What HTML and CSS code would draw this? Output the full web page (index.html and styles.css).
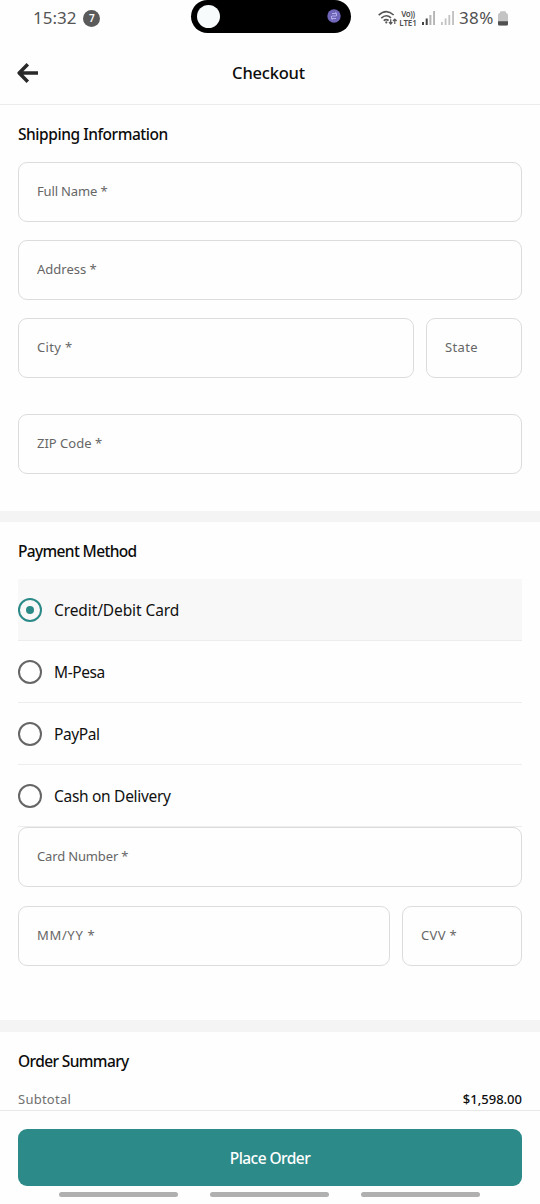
FILE: index.html
```html
<!DOCTYPE html>
<html lang="en">
<head>
<meta charset="utf-8">
<title>Checkout</title>
<link rel="stylesheet" href="styles.css">
</head>
<body>
<div class="screen">
  <div class="statusbar">
    <div class="status-left"><span class="clock">15:32</span><span class="count">7</span></div>
    <div class="island">
      <span class="camera"></span>
      <svg class="island-icon" width="14" height="14" viewBox="0 0 14 14"><circle cx="7" cy="7" r="6.7" fill="#6f66ba"/><path d="M5 4.500h4.500v2.500M8.300 3.200L9.800 4.500M9 9.500H4.500V7M5.700 10.800L4.200 9.500M5 7h4" fill="none" stroke="#b9b3ee" stroke-width=".9"/></svg>
    </div>
    <div class="status-right">
      <svg class="wifi" width="20" height="16" viewBox="0 0 20 16"><g fill="none" stroke="#555" stroke-width="1.6"><path d="M.7 5.2Q8 -1.8 15.7 5"/><path d="M3.300 8.100Q8 3.600 13 7.800"/><path d="M5.700 10.600Q8 8.700 10.600 10.500"/></g><circle cx="8.300" cy="12.400" r="1.100" fill="#555"/><path d="M12.700 9.300v4.500M11 12.200l1.700 1.900 1.700-1.900M16.800 14V9.200M15 11l1.800-1.900L18.600 11" fill="none" stroke="#555" stroke-width="1.200"/></svg>
      <div class="volte"><span class="vo">Vo))</span><span>LTE1</span></div>
      <svg class="signal" width="14" height="14" viewBox="0 0 14 14"><path d="M0 11h2v3H0zM3.700 7.500h2V14h-2z" fill="#444"/><path d="M7.400 4h2v10h-2zM11.100 0h1.900v14h-1.900z" fill="#b5b5b5"/></svg>
      <svg class="signal signal-two" width="14" height="14" viewBox="0 0 14 14"><path d="M0 11h1.800v3H0zM3.700 7.500h1.800V14H3.700zM7.400 4h1.800v10H7.400zM11.100 0h1.900v14h-1.900z" fill="#c2c2c2"/></svg>
      <span class="percent">38%</span>
      <svg class="battery" width="10" height="15" viewBox="0 0 10 15"><path d="M0 13V4Q0 2.200 2 2V1.200Q2 .2 3 .2h4q1 0 1 1V2q2 .2 2 2v9q0 1.500-1.500 1.500h-7Q0 14.500 0 13z" fill="#c4c4c4"/><path d="M0 10.200h10V13q0 1.500-1.500 1.500h-7Q0 14.500 0 13z" fill="#505050"/></svg>
    </div>
  </div>

  <header class="header">
    <svg class="back" width="22" height="22" viewBox="0 0 22 22"><path d="M21 11H3M10.800 2.300L2.200 11l8.600 8.700" fill="none" stroke="#292929" stroke-width="3.500" stroke-linejoin="round"/></svg>
    <h1 class="title">Checkout</h1>
  </header>

  <main class="content">
    <section class="section shipping">
      <h2 class="heading h-shipping">Shipping Information</h2>
      <div class="fields">
        <div class="field"><span class="tight">Full Name *</span></div>
        <div class="field"><span>Address *</span></div>
        <div class="row city-row"><div class="field"><span class="loose">City *</span></div><div class="field"><span class="loose">State</span></div></div>
        <div class="field zip"><span>ZIP Code *</span></div>
      </div>
    </section>

    <section class="section payment">
      <h2 class="heading h-payment">Payment Method</h2>
      <div class="options">
        <div class="option selected"><span class="radio"></span><span class="label l-card">Credit/Debit Card</span></div>
        <div class="option"><span class="radio"></span><span class="label">M-Pesa</span></div>
        <div class="option"><span class="radio"></span><span class="label">PayPal</span></div>
        <div class="option"><span class="radio"></span><span class="label l-cash">Cash on Delivery</span></div>
      </div>
      <div class="fields">
        <div class="field"><span class="tight">Card Number *</span></div>
        <div class="row expiry-row"><div class="field"><span class="caps">MM/YY *</span></div><div class="field"><span class="loose">CVV *</span></div></div>
      </div>
    </section>

    <section class="section summary">
      <h2 class="heading h-summary">Order Summary</h2>
      <div class="line"><span class="line-name">Subtotal</span><span class="line-value">$1,598.00</span></div>
    </section>
  </main>

  <footer class="footer">
    <div class="button"><span>Place Order</span></div>
    <div class="navhints"><i></i><i></i><i></i></div>
  </footer>
</div>
</body>
</html>
```
FILE: styles.css
```css
* { box-sizing: border-box; }
body { margin: 0; background: #fff; font-family: "Noto Sans", "Open Sans", sans-serif; color: #111; }
.screen { width: 540px; height: 1204px; display: flex; flex-direction: column; overflow: hidden; background: #fefefe; }

.statusbar { height: 36px; flex: none; display: grid; grid-template-columns: 191px 160px 1fr; align-items: start; }
.status-left { display: flex; align-items: center; height: 36px; padding-left: 33px; gap: 7px; color: #555; }
.clock { font-size: 17px; line-height: 20px; }
.count { width: 17px; height: 17px; border-radius: 50%; background: #5a5a5a; color: #fff; font-size: 10px; font-weight: 600; line-height: 17px; text-align: center; }
.island { height: 33px; background: #000; border-radius: 17px; display: flex; align-items: center; justify-content: space-between; padding: 0 10px 1px 6px; }
.camera { width: 23px; height: 23px; border-radius: 50%; background: #f8fbfc; }
.status-right { display: flex; align-items: center; height: 36px; padding-left: 27px; color: #505050; }
.wifi { flex: none; }
.volte { display: flex; flex-direction: column; align-items: center; width: 20px; font-size: 8px; line-height: 9px; font-weight: 600; letter-spacing: -.1px; }
.vo { line-height: 8px; letter-spacing: -.4px; }
.signal { margin-left: 4px; flex: none; }
.signal-two { margin-left: 5px; }
.percent { font-size: 17px; line-height: 20px; margin-left: 4px; width: 37px; letter-spacing: .4px; }
.battery { margin-left: 2px; }

.header { height: 69px; flex: none; display: grid; grid-template-columns: 48px 1fr 51px; align-items: center; border-bottom: 1px solid #ececec; }
.back { margin: 6px 0 0 17px; }
.title { margin: 6px 0 0; font-size: 16.5px; font-weight: 500; line-height: 22px; text-align: center; letter-spacing: -.2px; color: #0c0c0c; }

.content { flex: 1; min-height: 0; overflow: hidden; }
.section { padding: 17px 18px 0; border-bottom: 11px solid #f4f4f4; }
.shipping { height: 417px; }
.payment { height: 510px; border-bottom-width: 12px; }
.summary { border: 0; }
.heading { margin: 0; font-size: 15.5px; line-height: 24px; font-weight: 550; color: #0c0c0c; }
.h-shipping { letter-spacing: -.45px; }
.h-payment { letter-spacing: -.65px; }
.h-summary { letter-spacing: -.62px; }
.fields { display: flex; flex-direction: column; gap: 18px; }
.shipping .fields { margin-top: 16px; }
.field { height: 60px; border: 1px solid #dcdcdc; border-radius: 9px; display: flex; align-items: center; padding: 0 18px 2px; font-size: 13px; color: #666; }
.tight { letter-spacing: -.15px; }
.loose { letter-spacing: .35px; }
.caps { letter-spacing: .65px; }
.row { display: grid; column-gap: 12px; }
.city-row { grid-template-columns: 396px 96px; }
.expiry-row { grid-template-columns: 372px 120px; }
.zip { margin-top: 18px; }
.options { margin-top: 16px; }
.option { height: 62px; display: flex; align-items: center; gap: 12px; border-bottom: 1px solid #ededed; }
.selected { background: #f8f8f8; }
.radio { width: 24px; height: 24px; border: 2px solid #666; border-radius: 50%; display: grid; place-items: center; }
.selected .radio { border-color: #2b8a88; }
.selected .radio::after { content: ""; width: 8px; height: 8px; border-radius: 50%; background: #2b8a88; }
.label { font-size: 15.5px; line-height: 20px; letter-spacing: -.4px; }
.l-card { letter-spacing: -.1px; }
.l-cash { letter-spacing: -.3px; }
.payment .fields { gap: 19px; }
.line { display: flex; justify-content: space-between; margin-top: 16px; font-size: 13px; line-height: 20px; }
.line-name { color: #707070; letter-spacing: .25px; }
.line-value { font-weight: 550; color: #0c0c0c; }

.footer { height: 94px; flex: none; border-top: 1px solid #e8e8e8; padding: 18px 18px 0; background: #fefefe; }
.button { height: 57px; border-radius: 9px; background: #2c8a89; color: #fff; display: flex; align-items: center; justify-content: center; font-size: 15.5px; font-weight: 550; letter-spacing: -.55px; }
.navhints { display: flex; justify-content: center; gap: 32px; margin: 6px 1px 0 0; }
.navhints i { width: 119px; height: 5px; border-radius: 3px; background: #b0b0b0; }
```
